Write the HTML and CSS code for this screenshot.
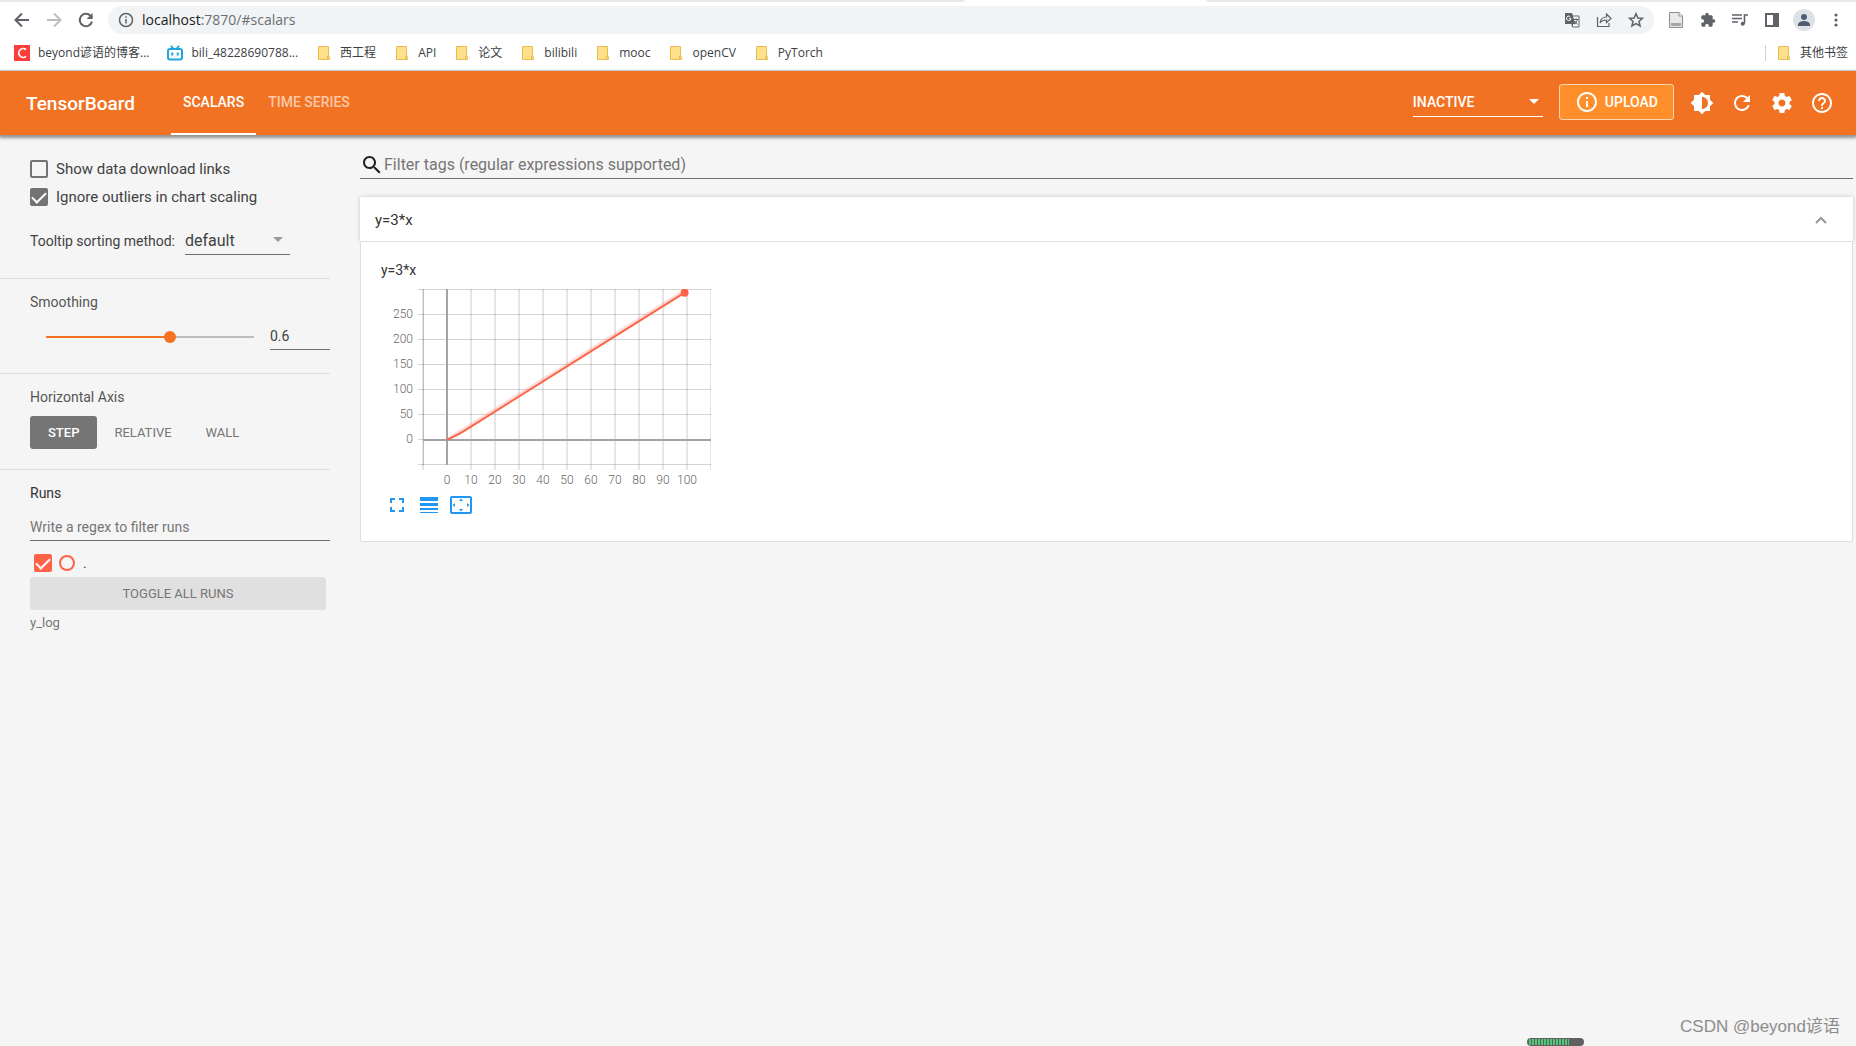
FILE: index.html
```html
<!DOCTYPE html>
<html lang="en">
<head>
<meta charset="utf-8">
<title>TensorBoard</title>
<link rel="stylesheet" href="styles.css">
</head>
<body>
<svg class="defs" aria-hidden="true">
  <symbol id="folder" viewBox="0 0 16 16"><path d="M2.5 1.500h10v10.500h1v2.500h-11z" fill="#ffe08d" stroke="#e8bd4e"/><path d="M11.500 14.500v-3.500h2" fill="none" stroke="#e8bd4e"/></symbol>
</svg>

<div class="browser">
  <div class="tabstrip"><span class="tab-before"></span><span class="tab-after"></span></div>
  <div class="toolbar">
    <button class="nav-btn" aria-label="Back"><svg width="16" height="16" viewBox="0 0 16 16" fill="none" stroke="#5f6368" stroke-width="2"><path d="M15 8H2M8 1.500L1.500 8 8 14.500"/></svg></button>
    <button class="nav-btn" aria-label="Forward"><svg width="16" height="16" viewBox="0 0 16 16" fill="none" stroke="#bbbdbf" stroke-width="2"><path d="M1 8h13M8 1.500L14.500 8 8 14.500"/></svg></button>
    <button class="nav-btn" aria-label="Reload"><svg width="16" height="16" viewBox="0 0 16 16" fill="none" stroke="#5f6368" stroke-width="2"><path d="M14 9.500A6.200 6.200 0 1 1 12.500 3.700L14 5.200"/><path d="M14.600 1v6h-6z" fill="#5f6368" stroke="none"/></svg></button>
    <div class="omnibox">
      <svg width="16" height="16" viewBox="0 0 16 16" fill="none" stroke="#5f6368" stroke-width="1.500"><circle cx="8" cy="8" r="6.500"/><path d="M8 7v4.500M8 4.200v1.600"/></svg>
      <span class="url">localhost<span class="url-rest">:7870/#scalars</span></span>
      <svg width="16" height="16" viewBox="0 0 16 16"><path d="M6 4h9v11H8.500z" fill="#fff" stroke="#5f6368"/><path d="M1 1h7l3.500 11H1z" fill="#5f6368"/><path d="M7 6.300H5.200M6.900 6.300A2.200 2.200 0 1 1 6 4.500" stroke="#fff" fill="none"/><path d="M9.500 7.500h5M12 6v1.500M13.500 8l-3 4.500M10.800 9l2.700 3.500M8.500 15v-3" stroke="#5f6368" fill="none"/></svg>
      <svg width="16" height="16" viewBox="0 0 16 16" fill="none" stroke="#5f6368" stroke-width="1.200"><path d="M1.500 5v9.500h11.500v-3.500"/><path d="M4 11c.5-4 3-6 6.500-6V2L15 6.500l-4.500 4.200V8C8 8 5.500 8.500 4 11z"/></svg>
      <svg width="16" height="16" viewBox="0 0 16 16" fill="none" stroke="#5f6368" stroke-width="1.500"><path d="M8 1.700l1.900 4.300 4.600.4-3.500 3 1.100 4.600L8 11.600 3.900 14 5 9.400l-3.500-3L6.100 6z"/></svg>
    </div>
    <div class="extensions">
      <svg width="16" height="16" viewBox="0 0 16 16"><path d="M1.500.5h9.500l3.500 3.500v11.500h-13z" fill="#e9e9e9" stroke="#8c8c8c"/><path d="M11 .5v3.500h3.500" fill="#fff" stroke="#8c8c8c"/><path d="M3 11h10v3H3z" fill="#a5a5a5"/></svg>
      <svg width="16" height="16" viewBox="0 0 24 24" fill="#5f6368"><path d="M20.500 11H19V7c0-1.100-.9-2-2-2h-4V3.500a2.500 2.500 0 0 0-5 0V5H4c-1.100 0-2 .9-2 2v3.800h1.500a2.700 2.700 0 0 1 0 5.400H2V20c0 1.100.9 2 2 2h3.800v-1.500a2.700 2.700 0 0 1 5.400 0V22H17c1.100 0 2-.9 2-2v-4h1.500a2.500 2.500 0 0 0 0-5z"/></svg>
      <svg width="16" height="16" viewBox="0 0 16 16" fill="none" stroke="#5f6368" stroke-width="1.600"><path d="M0 3h10M0 6.500h10M0 10h6M12.500 11.500V3H16"/><circle cx="10.800" cy="11.700" r="2" fill="#5f6368" stroke="none"/></svg>
      <svg width="16" height="16" viewBox="0 0 16 16"><path d="M1 1h14v14H1zM3 3v10h6V3z" fill="#5f6368" fill-rule="evenodd"/></svg>
      <svg width="22" height="22" viewBox="0 0 22 22"><circle cx="11" cy="11" r="11" fill="#dee1e6"/><g fill="#4f5f73"><circle cx="11" cy="8" r="3"/><path d="M5 17v-1.500c0-2.500 4-3.500 6-3.500s6 1 6 3.500V17z"/></g></svg>
      <svg width="16" height="16" viewBox="0 0 16 16" fill="#5f6368"><circle cx="8" cy="3" r="1.600"/><circle cx="8" cy="8" r="1.600"/><circle cx="8" cy="13" r="1.600"/></svg>
    </div>
  </div>
  <nav class="bookmarks" aria-label="Bookmarks">
    <a href="#"><svg width="16" height="16" viewBox="0 0 16 16"><path d="M0 0h16v16H0z" fill="#fc3d39"/><path d="M12 4.600A4.400 4.400 0 1 0 12 11.400" fill="none" stroke="#fff" stroke-width="1.800"/></svg>beyond谚语的博客...</a>
    <a href="#"><svg width="16" height="16" viewBox="0 0 16 16" fill="none" stroke="#20a5dc" stroke-width="2"><rect x="1" y="4" width="14" height="10.500" rx="2"/><path d="M4 .8L6.500 4M12 .8L9.500 4M5.300 7.500v3M10.700 7.500v3"/></svg>bili_48228690788...</a>
    <a href="#"><svg width="16" height="16"><use href="#folder"/></svg>西工程</a>
    <a href="#"><svg width="16" height="16"><use href="#folder"/></svg>API</a>
    <a href="#"><svg width="16" height="16"><use href="#folder"/></svg>论文</a>
    <a href="#"><svg width="16" height="16"><use href="#folder"/></svg>bilibili</a>
    <a href="#"><svg width="16" height="16"><use href="#folder"/></svg>mooc</a>
    <a href="#"><svg width="16" height="16"><use href="#folder"/></svg>openCV</a>
    <a href="#"><svg width="16" height="16"><use href="#folder"/></svg>PyTorch</a>
    <a href="#" class="other"><svg width="16" height="16"><use href="#folder"/></svg>其他书签</a>
  </nav>
</div>

<header class="header">
  <h1 class="brand">TensorBoard</h1>
  <nav class="tabs">
    <a href="#scalars" class="tab active">SCALARS</a>
    <a href="#timeseries" class="tab">TIME SERIES</a>
  </nav>
  <div class="plugins">
    <select class="plugins-select" aria-label="Inactive plugins"><option>INACTIVE</option></select>
    <svg class="arrow" width="10" height="5" viewBox="0 0 10 5"><path d="M0 0h10L5 5z" fill="#fff"/></svg>
  </div>
  <button class="upload"><svg width="24" height="24" viewBox="0 0 24 24" fill="#fff"><path d="M11 7h2v2h-2zm0 4h2v6h-2zm1-9C6.480 2 2 6.480 2 12s4.480 10 10 10 10-4.480 10-10S17.520 2 12 2zm0 18c-4.410 0-8-3.590-8-8s3.590-8 8-8 8 3.590 8 8-3.590 8-8 8z"/></svg>UPLOAD</button>
  <div class="actions">
    <button aria-label="Theme"><svg width="24" height="24" viewBox="0 0 24 24"><path d="M20 15.310L23.310 12 20 8.690V4h-4.690L12 .69 8.690 4H4v4.690L.69 12 4 15.310V20h4.690L12 23.310 15.310 20H20v-4.690zM12 18V6c3.310 0 6 2.690 6 6s-2.690 6-6 6z"/></svg></button>
    <button aria-label="Refresh"><svg width="24" height="24" viewBox="0 0 24 24"><path d="M17.650 6.350C16.200 4.900 14.210 4 12 4c-4.420 0-7.990 3.580-7.990 8s3.570 8 7.990 8c3.730 0 6.840-2.550 7.730-6h-2.080c-.82 2.330-3.040 4-5.650 4-3.310 0-6-2.690-6-6s2.690-6 6-6c1.660 0 3.140.69 4.220 1.780L13 11h7V4l-2.350 2.350z"/></svg></button>
    <button aria-label="Settings"><svg width="24" height="24" viewBox="0 0 24 24"><path d="M19.430 12.980c.04-.32.07-.64.07-.98s-.03-.66-.07-.98l2.110-1.650c.19-.15.24-.42.12-.64l-2-3.460c-.12-.22-.39-.3-.61-.22l-2.490 1c-.52-.4-1.080-.73-1.690-.98l-.38-2.650C14.460 2.180 14.250 2 14 2h-4c-.25 0-.46.18-.49.42l-.38 2.650c-.61.25-1.170.59-1.690.98l-2.490-1c-.23-.09-.49 0-.61.22l-2 3.460c-.13.22-.07.49.12.64l2.110 1.650c-.04.32-.07.65-.07.98s.03.66.07.98l-2.110 1.650c-.19.15-.24.42-.12.64l2 3.460c.12.22.39.3.61.22l2.490-1c.52.4 1.080.73 1.690.98l.38 2.650c.03.24.24.42.49.42h4c.25 0 .46-.18.49-.42l.38-2.650c.61-.25 1.170-.59 1.690-.98l2.490 1c.23.09.49 0 .61-.22l2-3.460c.12-.22.07-.49-.12-.64l-2.110-1.650zM12 15.500c-1.930 0-3.500-1.570-3.500-3.500s1.570-3.500 3.500-3.500 3.500 1.570 3.500 3.500-1.570 3.500-3.500 3.500z"/></svg></button>
    <button aria-label="Help"><svg width="24" height="24" viewBox="0 0 24 24"><path d="M11 18h2v-2h-2v2zm1-16C6.480 2 2 6.480 2 12s4.480 10 10 10 10-4.480 10-10S17.520 2 12 2zm0 18c-4.410 0-8-3.590-8-8s3.590-8 8-8 8 3.590 8 8-3.590 8-8 8zm0-14c-2.210 0-4 1.790-4 4h2c0-1.100.9-2 2-2s2 .9 2 2c0 2-3 1.750-3 5h2c0-2.250 3-2.500 3-5 0-2.210-1.790-4-4-4z"/></svg></button>
  </div>
</header>

<div class="content">
  <aside class="sidebar">
    <section class="options">
      <label class="check"><input type="checkbox">Show data download links</label>
      <label class="check"><input type="checkbox" checked>Ignore outliers in chart scaling</label>
      <div class="tooltip-row">
        <label for="sorting">Tooltip sorting method:</label>
        <div class="sorting">
          <select id="sorting"><option>default</option></select>
          <svg class="arrow" width="10" height="5" viewBox="0 0 10 5"><path d="M0 0h10L5 5z" fill="#9a9a9a"/></svg>
        </div>
      </div>
    </section>
    <section class="smoothing">
      <label class="heading" for="smooth">Smoothing</label>
      <div class="smooth-row">
        <input type="range" id="smooth" min="0" max="1" step="0.001" value="0.6">
        <input type="text" class="smooth-value" aria-label="Smoothing value" value="0.6">
      </div>
    </section>
    <section class="axis">
      <h2 class="heading">Horizontal Axis</h2>
      <div class="axis-buttons">
        <button class="selected">STEP</button>
        <button>RELATIVE</button>
        <button>WALL</button>
      </div>
    </section>
    <section class="runs">
      <h2 class="heading strong">Runs</h2>
      <input type="text" class="runs-filter" placeholder="Write a regex to filter runs" aria-label="Filter runs">
      <label class="run"><input type="checkbox" checked><span class="run-dot"></span><span>.</span></label>
      <button class="toggle-all">TOGGLE ALL RUNS</button>
      <p class="logdir">y_log</p>
    </section>
  </aside>

  <main class="main">
    <label class="tag-filter">
      <svg width="24" height="24" viewBox="0 0 24 24"><path d="M15.500 14h-.79l-.28-.27C15.410 12.590 16 11.110 16 9.500 16 5.910 13.090 3 9.500 3S3 5.910 3 9.500 5.910 16 9.500 16c1.610 0 3.090-.59 4.230-1.570l.27.28v.79l5 4.990L20.490 19l-4.990-5zm-6 0C7.010 14 5 11.990 5 9.500S7.010 5 9.500 5 14 7.010 14 9.500 11.990 14 9.500 14z" fill="#212121"/></svg>
      <input type="text" placeholder="Filter tags (regular expressions supported)" aria-label="Filter tags">
    </label>
    <section class="category">
      <button class="category-head">y=3*x<svg width="12" height="8" viewBox="0 0 12 8" fill="none" stroke="#969696" stroke-width="2"><path d="M1 7l5-5 5 5"/></svg></button>
      <div class="category-body">
        <h3 class="chart-title">y=3*x</h3>
        <svg class="chart" width="330" height="200" viewBox="0 0 330 200">
          <g fill="none" stroke="#000" stroke-opacity=".1" stroke-width="2">
            <path d="M42 0v181M90 0v181M114 0v181M138 0v181M162 0v181M186 0v181M210 0v181M234 0v181M258 0v181M282 0v181M306 0v181M330 0v181"/>
          </g>
          <path d="M37 .5h293M37 25.500h293M37 50.500h293M37 75.500h293M37 100.500h293M37 125.500h293M37 150.500h5M37 175.500h293M42.500 0v176" fill="none" stroke="#000" stroke-opacity=".17"/>
          <path d="M66 0v176M42 151h288" fill="none" stroke="#a3a3a3" stroke-width="2"/>
          <path d="M66 150.500L303.600 1.400" fill="none" stroke="#ff6347" stroke-opacity=".22" stroke-width="3"/>
          <path d="M66 150.500L68.400 149.600 70.800 148.500 73.200 147.300 75.600 146.100 78 144.800 82.800 142.100 90 137.600 303.600 3.700" fill="none" stroke="#ff6347" stroke-width="2"/>
          <circle cx="303.600" cy="3.700" r="4" fill="#ff6347"/>
          <g class="y-labels"><text x="32" y="29">250</text><text x="32" y="54">200</text><text x="32" y="79">150</text><text x="32" y="104">100</text><text x="32" y="129">50</text><text x="32" y="154">0</text></g>
          <g class="x-labels"><text x="66" y="195">0</text><text x="90" y="195">10</text><text x="114" y="195">20</text><text x="138" y="195">30</text><text x="162" y="195">40</text><text x="186" y="195">50</text><text x="210" y="195">60</text><text x="234" y="195">70</text><text x="258" y="195">80</text><text x="282" y="195">90</text><text x="306" y="195">100</text></g>
        </svg>
        <div class="chart-actions">
          <button aria-label="Fullscreen"><svg width="24" height="24" viewBox="0 0 24 24"><path d="M7 14H5v5h5v-2H7v-3zm-2-4h2V7h3V5H5v5zm12 7h-3v2h5v-5h-2v3zM14 5v2h3v3h2V5h-5z"/></svg></button>
          <button aria-label="Toggle log scale"><svg width="24" height="24" viewBox="0 0 24 24"><path d="M3 4h18v4H3zM3 10h18v3H3zM3 15h18v2H3zM3 19h18v1H3z"/></svg></button>
          <button aria-label="Fit domain to data"><svg width="24" height="24" viewBox="0 0 24 24"><path d="M12 5.500L10 8h4l-2-2.500zm6 4.500v4l2.500-2L18 10zM6 10l-2.500 2L6 14v-4zm8 6h-4l2 2.500 2-2.500zm7-13H3c-1.100 0-2 .9-2 2v14c0 1.100.9 2 2 2h18c1.100 0 2-.9 2-2V5c0-1.100-.9-2-2-2zm0 16H3V5h18v14z"/></svg></button>
        </div>
      </div>
    </section>
  </main>
</div>
<div class="meter"><span class="meter-fill"></span></div>
<div class="watermark">CSDN @beyond谚语</div>
</body>
</html>
```
FILE: styles.css
```css
* { box-sizing: border-box; }
body { margin: 0; min-height: 100vh; display: flex; flex-direction: column; background: #f5f5f5; color: #3c4043; font-family: Roboto, "Noto Sans CJK SC", sans-serif; font-size: 14px; position: relative; }
button { font: inherit; border: 0; background: none; padding: 0; display: flex; align-items: center; }
h1, h2, h3, p { margin: 0; font-weight: 400; }
svg { flex: none; display: block; }
input, select { font: inherit; color: inherit; background: none; border: 0; border-radius: 0; margin: 0; padding: 0; outline: 0; min-width: 0; }
select { appearance: none; }
.defs { position: absolute; width: 0; height: 0; }

/* Browser chrome */
.browser { background: #fff; border-bottom: 1px solid #d3d5d8; font-family: "Open Sans", "Noto Sans CJK SC", sans-serif; }
.tabstrip { height: 2px; display: flex; justify-content: space-between; }
.tab-before { width: 52%; background: #e7eaed; border-bottom-right-radius: 2px; }
.tab-after { width: 35%; background: #e7eaed; border-bottom-left-radius: 2px; }
.toolbar { display: flex; align-items: center; height: 36px; padding: 0 12px 0 6px; }
.nav-btn { width: 32px; height: 32px; justify-content: center; }
.omnibox { flex: 1; display: flex; align-items: center; gap: 16px; height: 28px; margin-left: 6px; padding: 0 10px; border-radius: 14px; background: #f1f3f4; }
.url { flex: 1; margin-left: -8px; font-size: 14px; line-height: 20px; color: #202124; }
.url-rest { color: #6b6f73; }
.extensions { display: flex; align-items: center; gap: 16px; margin-left: 14px; }
.extensions svg:nth-child(5) { margin: 0 -3px; }
.bookmarks { display: flex; align-items: center; gap: 18px; height: 32px; padding: 0 8px 2px 14px; }
.bookmarks a { display: flex; align-items: center; gap: 8px; color: #3c4043; font-size: 12px; line-height: 16px; text-decoration: none; white-space: nowrap; }
.bookmarks .other { margin-left: auto; padding-left: 10px; border-left: 1px solid #cfd1d4; }

/* Header */
.header { display: flex; align-items: center; height: 64px; padding: 0 14px 0 26px; background: #f17222; color: #fff; box-shadow: 0 2px 3px 1px rgba(0, 0, 0, .4); position: relative; }
.brand { width: 145px; font-size: 19px; font-weight: 500; }
.tabs { display: flex; height: 100%; }
.tab { display: flex; align-items: center; padding: 0 12px; border-bottom: 2px solid transparent; color: #fbc9a8; font-weight: 500; text-decoration: none; }
.tab.active { color: #fff; border-color: #fff; }
.plugins { display: flex; align-items: center; width: 130px; height: 30px; margin: 0 16px 2px auto; border-bottom: 1px solid #fff; }
.plugins-select { flex: 1; height: 28px; font-weight: 500; }
.plugins .arrow { margin-right: 4px; }
.upload { gap: 6px; height: 36px; padding: 0 15px; margin: 0 8px 2px 0; border: 1px solid #fbd5b2; border-radius: 3px; background: #ff8f2a; color: #fff; font-weight: 500; }
.actions { display: flex; }
.actions button { width: 40px; height: 40px; justify-content: center; }
.actions svg { fill: #fff; }

/* Sidebar */
.content { display: flex; flex: 1; }
.sidebar { width: 330px; flex: none; color: #424242; }
.sidebar section { padding-left: 30px; border-bottom: 1px solid #dfdfdf; }
.sidebar .runs { border: 0; }
.options { height: 144px; padding-top: 20px; }
.check { display: flex; align-items: center; gap: 8px; height: 28px; font-size: 15px; }
input[type="checkbox"] { appearance: none; width: 18px; height: 18px; border: 2px solid #737373; border-radius: 2px; }
input[type="checkbox"]:checked { background: #737373; display: grid; place-items: start center; }
input[type="checkbox"]:checked::after { content: ""; width: 6px; height: 12px; margin-top: -1px; border: solid #fff; border-width: 0 2px 2px 0; transform: rotate(45deg); }
.tooltip-row { display: flex; align-items: center; gap: 10px; margin-top: 14px; }
.tooltip-row label { padding-top: 2px; }
.sorting { display: flex; align-items: center; width: 105px; height: 30px; border-bottom: 1px solid #6f6f6f; font-size: 16px; }
.sorting select { flex: 1; height: 28px; padding-top: 2px; }
.sorting .arrow { margin-right: 7px; }
.heading { display: block; font-size: 14px; line-height: 20px; color: #555; }
.heading.strong { color: #333; }
.smoothing { height: 95px; padding-top: 13px; }
.smooth-row { display: flex; align-items: center; gap: 16px; margin-top: 12px; }
input[type="range"] { appearance: none; flex: 1; height: 12px; margin-left: 16px; background: linear-gradient(90deg, #f37321 60%, #bdbdbd 60%) center / 100% 2px no-repeat; }
input[type="range"]::-webkit-slider-thumb { appearance: none; width: 12px; height: 12px; border-radius: 50%; background: #f37321; }
.smooth-value { width: 60px; height: 26px; padding-bottom: 2px; border-bottom: 1px solid #6f6f6f; }
.axis { height: 96px; padding-top: 13px; }
.axis-buttons { display: flex; margin-top: 9px; }
.axis-buttons button { height: 33px; padding: 0 17px; border-radius: 3px; font-size: 13px; color: #757575; }
.axis-buttons .selected { padding: 0 18px; background: #757575; color: #fff; font-weight: 500; }
.runs { padding-top: 13px; }
.runs-filter { display: block; width: 100%; height: 28px; margin-top: 10px; border-bottom: 1px solid #6f6f6f; }
input::placeholder { color: #757575; opacity: 1; }
.run { display: flex; align-items: center; gap: 7px; height: 36px; padding: 8px 0 0 4px; }
.run input[type="checkbox"] { border-color: #ff6347; background: #ff6347; }
.run-dot { width: 16px; height: 16px; border: 2px solid #ff6347; border-radius: 50%; margin-right: 1px; }
.toggle-all { width: 296px; height: 33px; justify-content: center; border-radius: 3px; background: #e0e0e0; color: #757575; font-size: 13px; }
.logdir { margin-top: 4px; font-size: 13px; line-height: 18px; color: #757575; }

/* Main pane */
.main { flex: 1; padding: 12px 3px 0 30px; color: #333; }
.tag-filter { display: flex; align-items: center; height: 32px; padding-top: 4px; border-bottom: 1px solid #6f6f6f; font-size: 16px; }
.tag-filter input { flex: 1; }
.category { margin-top: 18px; }
.category-head { width: 100%; height: 44px; padding: 1px 26px 0 15px; justify-content: space-between; background: #fff; font-size: 15px; color: #333; box-shadow: 0 0 4px rgba(0, 0, 0, .2); }
.category-body { padding: 18px 20px 24px; border: 1px solid #dedede; border-radius: 0 0 2px 2px; background: #fff; position: relative; }
.chart-title { font-size: 14px; line-height: 20px; margin-bottom: 9px; }
.chart text { font-size: 12px; font-weight: 300; fill: #666; }
.y-labels { text-anchor: end; }
.x-labels { text-anchor: middle; }
.chart-actions { display: flex; padding-left: 4px; gap: 8px; margin-top: 4px; }
.chart-actions svg { fill: #2196f3; }

/* Overlays on the bottom edge */
.meter { position: absolute; right: 272px; bottom: 0; width: 57px; height: 8px; padding: 1px 2px; border-radius: 4px; background: #606060; }
.meter-fill { display: block; width: 40px; height: 6px; background: repeating-linear-gradient(90deg, #4fc878 0 2px, #606060 2px 3px); }
.watermark { position: absolute; right: 16px; bottom: 6px; color: #8c8c8c; font: 17px/26px "Liberation Sans", "Noto Sans CJK SC", sans-serif; }
```
